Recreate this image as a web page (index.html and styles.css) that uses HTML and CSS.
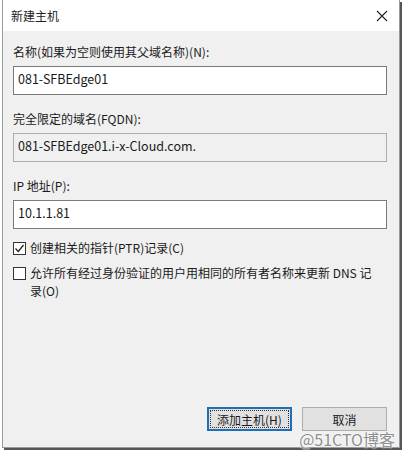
FILE: index.html
```html
<!DOCTYPE html>
<html lang="zh-CN">
<head>
    <meta charset="UTF-8">
    <title>新建主机</title>
    <link rel="stylesheet" href="styles.css">
</head>
<body>
    <div class="dialog">
        <div class="titlebar">
            <span class="title">新建主机</span>
            <svg class="close" width="12" height="12" viewBox="0 0 12 12">
                <path d="M1 1 L11 11 M11 1 L1 11" stroke="#222" stroke-width="1.1" fill="none"/>
            </svg>
        </div>
        <div class="dialog-body">
            <div class="field">
                <label class="label">名称(如果为空则使用其父域名称)(N):</label>
                <div class="textbox">081-SFBEdge01</div>
            </div>
            <div class="field">
                <label class="label">完全限定的域名(FQDN):</label>
                <div class="textbox readonly">081-SFBEdge01.i-x-Cloud.com.</div>
            </div>
            <div class="field">
                <label class="label">IP 地址(P):</label>
                <div class="textbox">10.1.1.81</div>
            </div>
            <div class="check-row first">
                <span class="checkbox">
                    <svg width="11" height="11" viewBox="0 0 11 11">
                        <path d="M1.5 5.5 L4.3 8.5 L9.5 2" stroke="#222" stroke-width="1.3" fill="none"/>
                    </svg>
                </span>
                <span class="check-text">创建相关的指针(PTR)记录(C)</span>
            </div>
            <div class="check-row">
                <span class="checkbox"></span>
                <span class="check-text">允许所有经过身份验证的用户用相同的所有者名称来更新 DNS 记录(O)</span>
            </div>
            <div class="spacer"></div>
            <div class="buttons">
                <button class="btn default">添加主机(H)</button>
                <button class="btn">取消</button>
            </div>
        </div>
        <div class="watermark">@51CTO博客</div>
    </div>
</body>
</html>
```

FILE: styles.css
```css
body {
    margin: 0;
    width: 403px;
    height: 457px;
    background: #fff;
    font-family: "Microsoft YaHei", "Noto Sans CJK SC", "Noto Sans", sans-serif;
    font-size: 12px;
    color: #1a1a1a;
    overflow: hidden;
}
.dialog {
    position: relative;
    margin-left: 2px;
    width: 396px;
    height: 447px;
    border: 1px solid #9a9a9a;
    border-top: none;
    box-shadow: 2px 2px 0 #555;
    background: #f0f0f0;
    display: flex;
    flex-direction: column;
}
.titlebar {
    height: 31px;
    background: #fff;
    display: flex;
    align-items: center;
    justify-content: space-between;
    padding: 0 10px 0 8px;
    flex-shrink: 0;
}
.title {
    font-size: 12px;
    color: #222;
}
.close {
    margin-right: 1px;
}
.dialog-body {
    flex-grow: 1;
    display: flex;
    flex-direction: column;
    padding: 13px 12px 16px 10px;
}
.field {
    margin-bottom: 16px;
}
.label {
    display: block;
    line-height: 16px;
    margin-bottom: 6px;
}
.textbox {
    height: 27px;
    border: 1px solid #7a7a7a;
    background: #fff;
    line-height: 24px;
    padding: 0 4px;
    font-size: 12.5px;
}
.textbox.readonly {
    background: #f0f0f0;
    border-color: #adadad;
}
.check-row {
    display: flex;
    align-items: flex-start;
    margin-top: -5px;
    margin-bottom: 12px;
    line-height: 18px;
}
.check-row.first {
    margin-top: -6px;
}
.checkbox {
    width: 11px;
    height: 11px;
    border: 1px solid #333;
    background: #fff;
    margin: 3px 4px 0 0;
    flex-shrink: 0;
    display: flex;
}
.check-text {
    padding-right: 8px;
}
.spacer {
    flex-grow: 1;
}
.buttons {
    display: flex;
    justify-content: flex-end;
    gap: 10px;
}
.btn {
    width: 85px;
    height: 24px;
    border: 1px solid #adadad;
    background: #e1e1e1;
    font-family: inherit;
    font-size: 12px;
    color: #1a1a1a;
    padding: 0;
}
.btn.default {
    border: 2px solid #1f6fb6;
    outline: 1px dotted #333;
    outline-offset: -4px;
}
.watermark {
    position: absolute;
    right: 4px;
    bottom: -1px;
    font-size: 16px;
    line-height: 18px;
    color: #8f8f8f;
    text-shadow: 0 0 2px #fff, 0 0 2px #fff;
}
```
